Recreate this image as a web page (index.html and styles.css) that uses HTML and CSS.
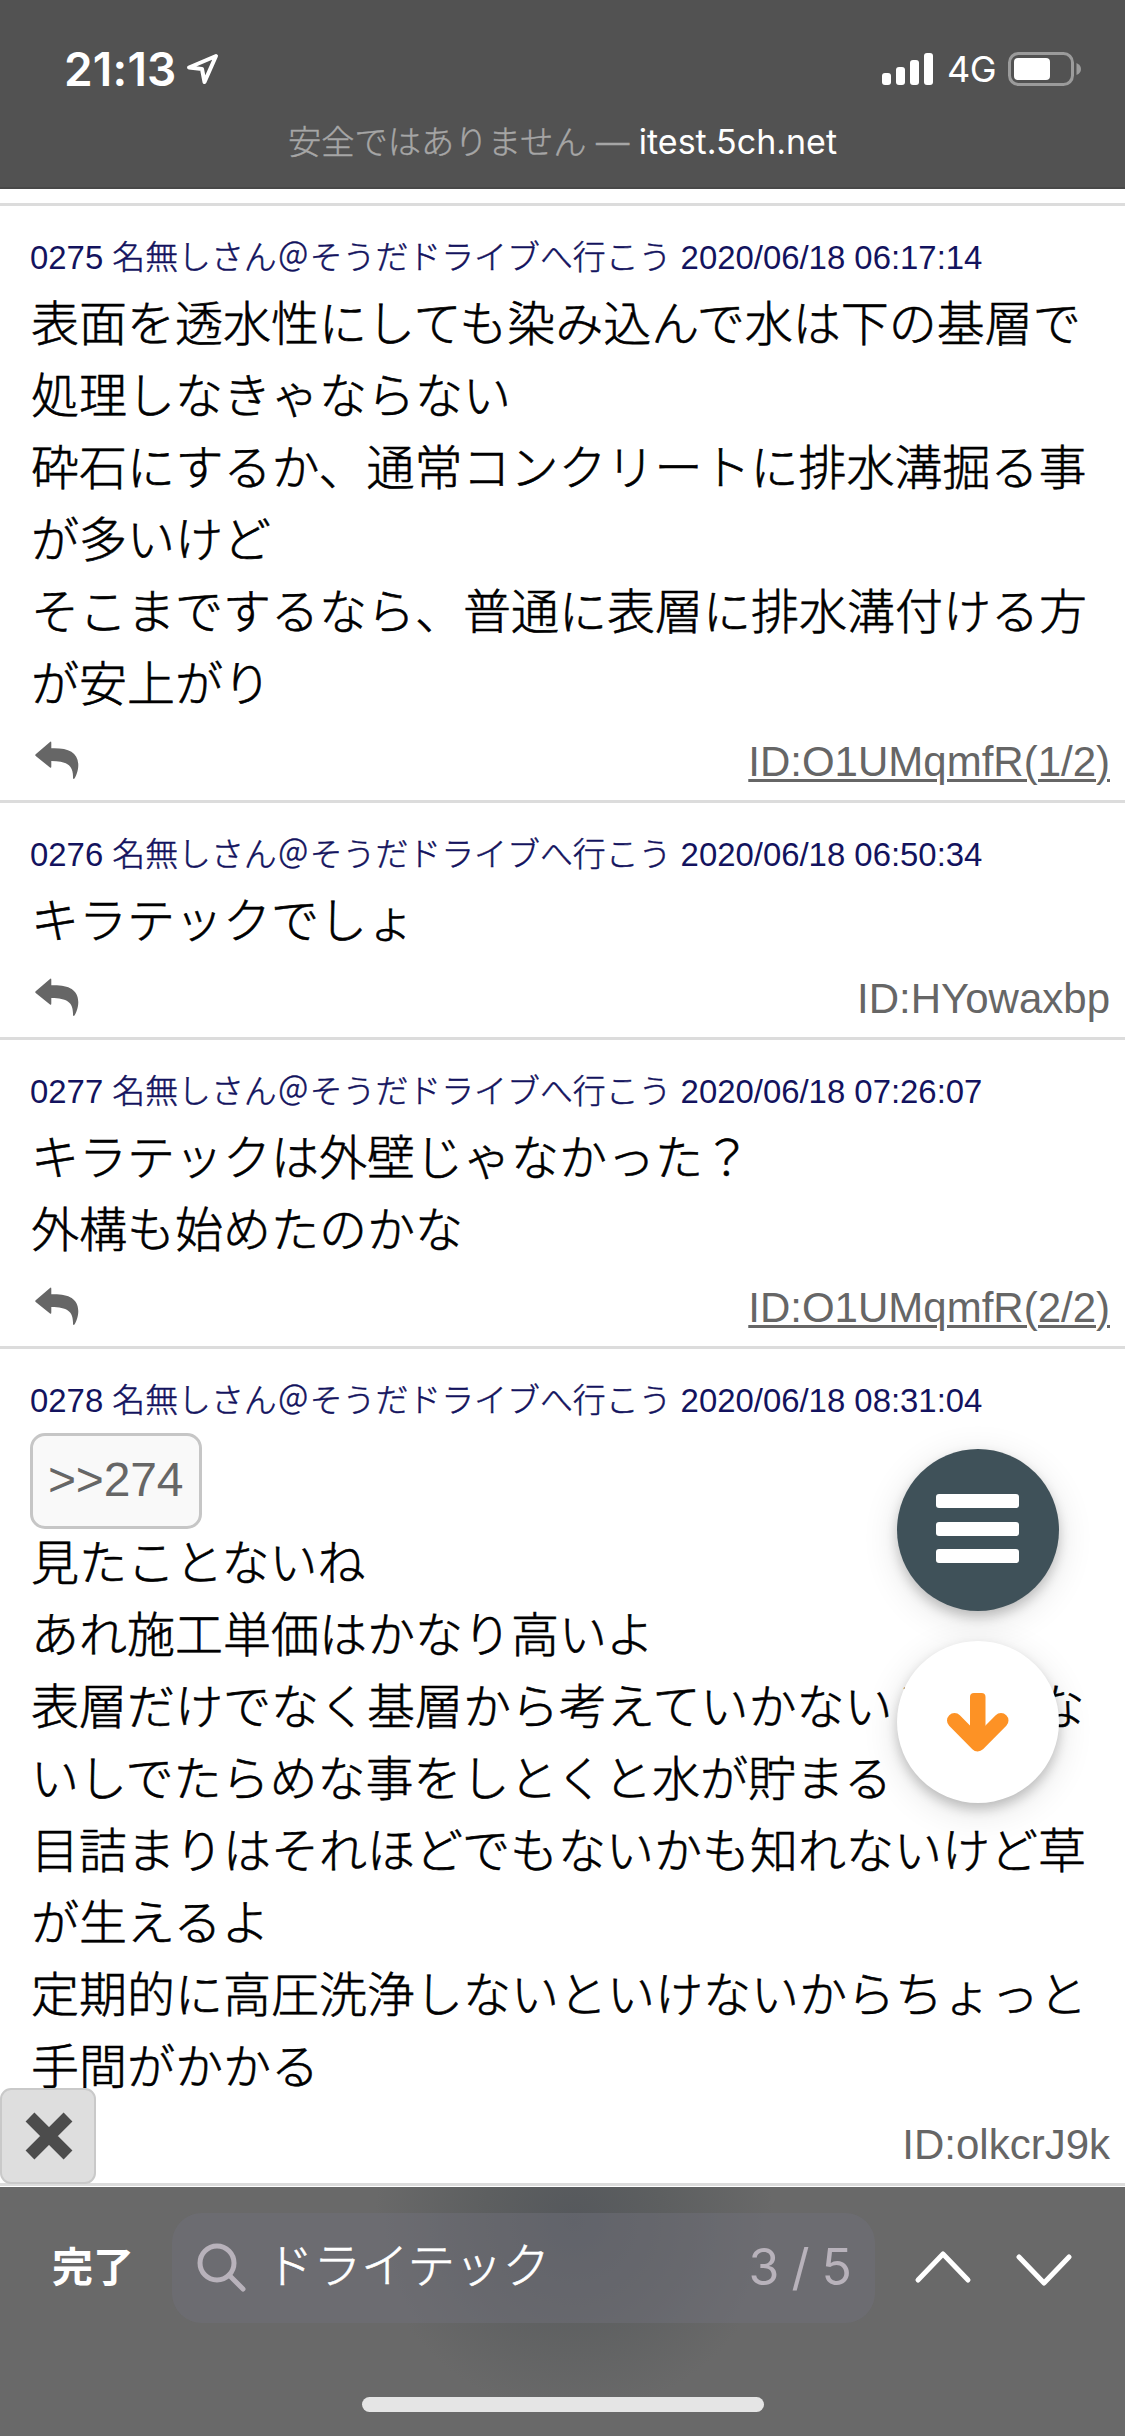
FILE: index.html
```html
<!DOCTYPE html>
<html lang="ja">
<head>
<meta charset="utf-8">
<title>itest.5ch.net</title>
<link rel="stylesheet" href="styles.css">
</head>
<body>
<svg class="defs" aria-hidden="true">
  <symbol id="reply" viewBox="0 0 44 40">
    <path d="M.7 13.2 15 .9Q16.3 0 16.3 1.8V7.2C33 6.600 43 11 43.300 24 43.300 30 41 35 39.500 37.500Q38.300 38.500 38 37C38.500 25 33 20 16.300 20V25.500Q16.300 27.500 15 26.500L.7 15Q-.3 14 .7 13.200Z"/>
  </symbol>
</svg>
<div class="screen">
  <header class="browser-bar">
    <div class="status">
      <div class="clock">
        <span class="time">21:13</span>
        <svg class="location" viewBox="0 0 34 32"><path d="M30 3 3 14.500 16 16 18.500 29Z"/></svg>
      </div>
      <div class="signals">
        <div class="cell"><i class="bar b1"></i><i class="bar b2"></i><i class="bar b3"></i><i class="bar b4"></i></div>
        <span class="network">4G</span>
        <svg class="battery" viewBox="0 0 75 34"><rect class="shell" x="1.500" y="1.500" width="63" height="31" rx="9"/><rect class="charge" x="6" y="6" width="36" height="22" rx="4"/><path class="nub" d="M68.500 11Q73 13 73 17T68.500 23Z"/></svg>
      </div>
    </div>
    <div class="address"><span class="warning">安全ではありません —</span> <span class="host">itest.5ch.net</span></div>
  </header>

  <main class="thread">
    <article class="post">
      <h2 class="meta">0275 <span class="name">名無しさん＠そうだドライブへ行こう</span> 2020/06/18 06:17:14</h2>
      <p class="message">表面を透水性にしても染み込んで水は下の基層で<br>処理しなきゃならない<br>砕石にするか、通常コンクリートに排水溝掘る事<br>が多いけど<br>そこまでするなら、普通に表層に排水溝付ける方<br>が安上がり</p>
      <footer class="actions"><svg class="reply"><use href="#reply"/></svg><a class="id linked">ID:O1UMqmfR(1/2)</a></footer>
    </article>
    <article class="post">
      <h2 class="meta">0276 <span class="name">名無しさん＠そうだドライブへ行こう</span> 2020/06/18 06:50:34</h2>
      <p class="message">キラテックでしょ</p>
      <footer class="actions"><svg class="reply"><use href="#reply"/></svg><span class="id">ID:HYowaxbp</span></footer>
    </article>
    <article class="post">
      <h2 class="meta">0277 <span class="name">名無しさん＠そうだドライブへ行こう</span> 2020/06/18 07:26:07</h2>
      <p class="message">キラテックは外壁じゃなかった？<br>外構も始めたのかな</p>
      <footer class="actions"><svg class="reply"><use href="#reply"/></svg><a class="id linked">ID:O1UMqmfR(2/2)</a></footer>
    </article>
    <article class="post">
      <h2 class="meta">0278 <span class="name">名無しさん＠そうだドライブへ行こう</span> 2020/06/18 08:31:04</h2>
      <a class="quote">&gt;&gt;274</a>
      <p class="message">見たことないね<br>あれ施工単価はかなり高いよ<br>表層だけでなく基層から考えていかないといけな<br>いしでたらめな事をしとくと水が貯まる<br>目詰まりはそれほどでもないかも知れないけど草<br>が生えるよ<br>定期的に高圧洗浄しないといけないからちょっと<br>手間がかかる</p>
      <footer class="actions last"><span class="id">ID:olkcrJ9k</span></footer>
    </article>
    <div class="floating">
      <button class="fab menu" aria-label="メニュー"><i></i><i></i><i></i></button>
      <button class="fab down" aria-label="下へ"><svg viewBox="0 0 64 62"><rect x="24" y="1" width="15.500" height="46" rx="4"/><path d="M8.500 28.500 31.700 52 55 28.500"/></svg></button>
    </div>
    <button class="close" aria-label="閉じる"><svg viewBox="0 0 48 48"><path d="M5 5 43 43M43 5 5 43"/></svg></button>
  </main>

  <footer class="find-bar">
    <div class="find-row">
      <span class="done">完了</span>
      <div class="search">
        <svg class="lens" viewBox="0 0 50 50"><circle cx="20" cy="20" r="17"/><path d="M32 32 46 46"/></svg>
        <span class="query">ドライテック</span>
        <span class="count">3 / 5</span>
      </div>
      <svg class="chevron up" viewBox="0 0 56 32"><path d="M3 29 28 3 53 29"/></svg>
      <svg class="chevron next" viewBox="0 0 56 32"><path d="M3 3 28 29 53 3"/></svg>
    </div>
    <div class="home"></div>
  </footer>
</div>
</body>
</html>
```
FILE: styles.css
```css
* { box-sizing: border-box; }
body { margin: 0; background: #fff; }
.defs { display: none; }
.screen {
  width: 1125px;
  height: 2436px;
  overflow: hidden;
  display: flex;
  flex-direction: column;
  font-family: "Liberation Sans", "Noto Sans CJK JP", sans-serif;
  background: #fff;
}
svg { flex: none; overflow: visible; }

.browser-bar {
  height: 189px;
  background: #525252;
  border-bottom: 2px solid #484848;
  color: #fff;
  font-family: Inter, "Noto Sans CJK JP", sans-serif;
}
.status {
  display: flex;
  justify-content: space-between;
  align-items: center;
  height: 138px;
  padding: 0 42px 0 64px;
}
.clock { display: flex; align-items: center; gap: 9px; }
.time { font-size: 46px; font-weight: 600; letter-spacing: .2px; line-height: 46px; }
.location { width: 34px; height: 32px; fill: none; stroke: #fff; stroke-width: 4; stroke-linejoin: round; }
.signals { display: flex; align-items: center; }
.cell { display: flex; align-items: flex-end; gap: 5px; height: 32px; margin-right: 14px; }
.bar { width: 9px; border-radius: 3px; background: #fff; }
.b1 { height: 12px; }
.b2 { height: 18px; }
.b3 { height: 25px; }
.b4 { height: 32px; }
.network { width: 61px; font-size: 36px; font-weight: 400; letter-spacing: -.5px; line-height: 40px; }
.battery { width: 75px; height: 34px; }
.shell { fill: none; stroke: #9b9b9b; stroke-width: 3; }
.charge { fill: #fff; }
.nub { fill: #9b9b9b; }
.address { font-size: 34px; line-height: 8px; text-align: center; white-space: nowrap; }
.warning { color: #a6a6a6; font-size: 33.300px; font-weight: 300; -webkit-text-stroke: .4px; }

.thread { position: relative; height: 1998px; padding-top: 14px; }
.thread::before { content: ""; display: block; height: 3px; background: #dcdcdc; }
.post { border-bottom: 3px solid #dcdcdc; }
.meta {
  margin: 0;
  height: 78px;
  padding: 34px 30px 0;
  font-size: 32.900px;
  line-height: 36px;
  font-weight: 300;
  color: #13135e;
  white-space: nowrap;
}
.name { -webkit-text-stroke: .5px; }
.message {
  margin: 0;
  padding-left: 31px;
  font-family: "Noto Sans CJK JP", sans-serif;
  font-size: 48px;
  line-height: 72px;
  font-weight: 300;
  color: #000;
  white-space: nowrap;
  -webkit-text-stroke: .6px;
}
.actions { display: flex; justify-content: space-between; height: 84px; padding: 22px 15px 0 35px; }
.actions.last { justify-content: flex-end; }
.reply { width: 44px; height: 40px; margin-top: 3px; fill: #666; }
.id { font-size: 42px; line-height: 48px; color: #666; }
.linked { text-decoration: underline; text-decoration-thickness: 3px; text-underline-offset: 3px; }
.quote {
  display: block;
  width: 172px;
  height: 96px;
  margin: 6px 0 -6px 30px;
  padding-left: 15px;
  border: 3px solid #c6c6c6;
  border-radius: 15px;
  background: #f9f9f9;
  color: #666;
  font-size: 48px;
  line-height: 87px;
  letter-spacing: -.2px;
}
.floating { position: absolute; left: 897px; top: 1260px; display: flex; flex-direction: column; gap: 30px; }
.fab {
  width: 162px;
  height: 162px;
  padding: 0;
  border: 0;
  border-radius: 50%;
  display: flex;
  flex-direction: column;
  align-items: center;
  justify-content: center;
  box-shadow: 0 6px 12px rgba(0, 0, 0, .2), 0 8px 36px rgba(0, 0, 0, .12);
}
.menu { background: #3f5159; gap: 13.500px; padding-right: 2px; padding-bottom: 3px; }
.menu i { width: 83px; height: 14px; border-radius: 3px; background: #fff; }
.down { background: #fff; }
.down svg { width: 64px; height: 62px; margin-top: 2px; }
.down path { fill: none; stroke: #fd9225; stroke-width: 15; stroke-linecap: round; stroke-linejoin: round; }
.down rect { fill: #fd9225; }
.close {
  position: absolute;
  left: 0;
  top: 1899px;
  width: 96px;
  height: 96px;
  padding: 0 0 0 1px;
  border: 2px solid #c9c9c9;
  border-radius: 11px;
  background: #dedede;
  display: flex;
  align-items: center;
  justify-content: center;
}
.close svg { width: 48px; height: 48px; }
.close path { fill: none; stroke: #4c4c4c; stroke-width: 12.500; }

.find-bar {
  height: 249px;
  padding-top: 26px;
  background: radial-gradient(ellipse 200px 190px at 574px 35px, #55585c 0%, #5d5f60 45%, rgba(105, 105, 105, 0) 100%), #696969;
  color: #fff;
  font-family: Inter, "Noto Sans CJK JP", sans-serif;
}
.find-row { display: flex; align-items: center; height: 110px; padding-left: 52px; }
.done { width: 120px; font-size: 41px; font-weight: 700; line-height: 60px; margin-top: -2px; }
.search {
  width: 703px;
  height: 110px;
  border-radius: 30px;
  background: rgba(112, 112, 124, .45);
  display: flex;
  align-items: center;
  padding: 0 24px 0 25px;
}
.lens { width: 50px; height: 50px; fill: none; stroke: #b8b2bb; stroke-width: 5; stroke-linecap: round; }
.query { margin: -4px 0 0 19px; font-size: 47.500px; font-weight: 300; line-height: 60px; -webkit-text-stroke: .6px; }
.count { margin: -3px 0 0 auto; font-size: 50px; line-height: 60px; color: #b8b2bb; font-weight: 400; letter-spacing: -1px; }
.chevron { width: 56px; height: 32px; fill: none; stroke: #fff; stroke-width: 5; stroke-linecap: round; stroke-linejoin: round; }
.up { margin-left: 40px; margin-top: -2px; }
.next { margin-left: 45px; margin-top: 4px; }
.home { width: 402px; height: 15px; margin: 74px auto 0; border-radius: 8px; background: #e5e5e5; }
```
